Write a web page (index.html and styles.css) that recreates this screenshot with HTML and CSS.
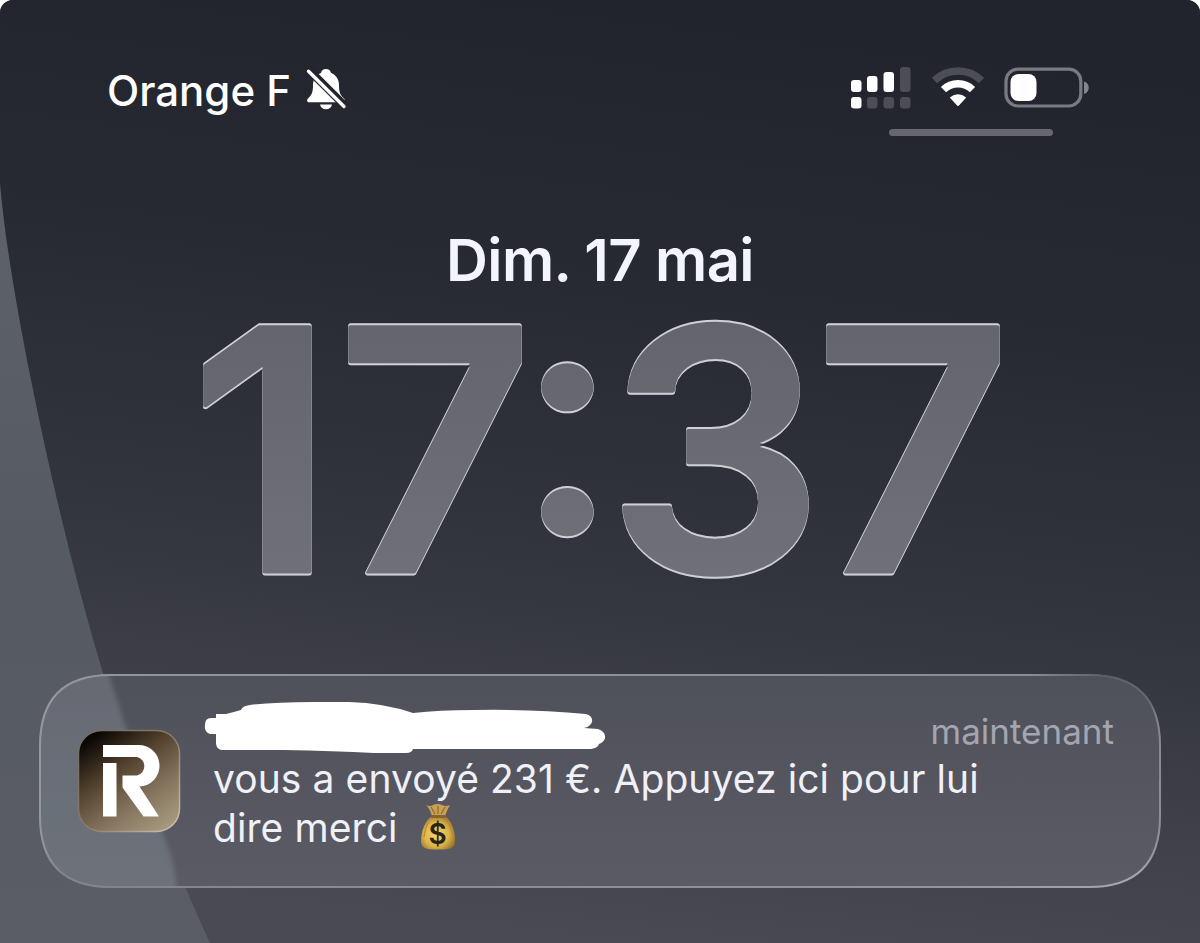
FILE: index.html
```html
<!doctype html>
<html lang="fr">
<head>
  <meta charset="utf-8">
  <title>Écran verrouillé</title>
  <link rel="stylesheet" href="styles.css">
</head>
<body>
  <div class="phone">

    <!-- wallpaper -->
    <svg class="wallpaper" viewBox="0 0 1200 943">
      <defs>
        <linearGradient id="sky" gradientUnits="userSpaceOnUse" x1="660" y1="0" x2="540" y2="943">
          <stop offset="0" stop-color="#21232d"/>
          <stop offset="0.3" stop-color="#272933"/>
          <stop offset="0.6" stop-color="#32343e"/>
          <stop offset="0.8" stop-color="#3f404a"/>
          <stop offset="1" stop-color="#494a54"/>
        </linearGradient>
        <linearGradient id="side" x1="0" y1="0" x2="0" y2="1">
          <stop offset="0" stop-color="#5d6168"/>
          <stop offset="0.5" stop-color="#565a62"/>
          <stop offset="1" stop-color="#5a5d66"/>
        </linearGradient>
      </defs>
      <rect width="1200" height="943" fill="url(#sky)"/>
      <path d="M0 183C4 230 14 295 31 380C50 475 75 580 103 673C130 755 172 860 210 943H0Z" fill="url(#side)"/>
    </svg>

    <header class="status">
      <div class="carrier">
        <span class="carrier-name">Orange F</span>
        <svg class="bell" width="42" height="44" viewBox="0 0 42 44">
          <path d="M21 3c2.600 0 4.600 1.600 4.900 3.800C31 9 34 13.500 34 19c0 8 1.500 10 5 13.500 1.600 1.800 1 3.800-1.400 3.800H4.400C2 36.300 1.400 34.300 3 32.500 6.500 29 8 27 8 19c0-5.500 3-10 8.100-12.200C16.400 4.600 18.400 3 21 3z" fill="#fff"/>
          <path d="M15 38.500h12c-.6 3-3 4.700-6 4.700s-5.400-1.700-6-4.700z" fill="#fff"/>
          <path d="M1 1L42 42" stroke="#22242e" stroke-width="8"/>
          <path d="M3.500 5.200L39 40.500" stroke="#fff" stroke-width="3.400" stroke-linecap="round"/>
        </svg>
      </div>
      <div class="indicators">
        <svg width="62" height="44" viewBox="0 0 62 44">
          <g fill="#fff">
            <rect x="1" y="14" width="10.500" height="12" rx="3"/>
            <rect x="17" y="10" width="10.500" height="16" rx="3"/>
            <rect x="33.500" y="6" width="10.500" height="20" rx="3"/>
            <rect x="1" y="31" width="10.500" height="11.500" rx="3"/>
          </g>
          <g fill="#4c4d56">
            <rect x="50" y="1" width="10.500" height="25" rx="3"/>
            <rect x="17" y="31" width="10.500" height="11.500" rx="3"/>
            <rect x="33.500" y="31" width="10.500" height="11.500" rx="3"/>
            <rect x="50" y="31" width="10.500" height="11.500" rx="3"/>
          </g>
        </svg>
        <svg class="wifi" width="54" height="44" viewBox="0 0 54 44">
          <path d="M3.500 14.500A34 34 0 0 1 50.500 14.500" fill="none" stroke="#4c4d56" stroke-width="7.500"/>
          <path d="M12.500 23.600A21 21 0 0 1 41.500 23.600" fill="none" stroke="#fff" stroke-width="7.500"/>
          <path d="M18.800 31.500Q27 25 35.200 31.500L28.200 39.300Q27 40.500 25.800 39.300Z" fill="#fff"/>
        </svg>
        <svg class="battery" width="86" height="44" viewBox="0 0 86 44">
          <rect x="2" y="3.200" width="74.800" height="36.800" rx="12" fill="none" stroke="#797a82" stroke-width="3.200"/>
          <rect x="6.500" y="8" width="26" height="27" rx="8" fill="#fff"/>
          <path d="M80 15.500c2.800.8 4.700 3 4.700 6.300s-1.900 5.500-4.700 6.300z" fill="#85868d"/>
        </svg>
        <div class="grabber"></div>
      </div>
    </header>

    <div class="date">Dim. 17 mai</div>

    <!-- glass clock: the filter lights the top and bottom edges of the digits -->
    <svg class="clock" width="1200" height="290" viewBox="0 0 1200 290">
      <defs>
        <linearGradient id="digits" gradientUnits="userSpaceOnUse" x1="0" y1="20" x2="0" y2="278">
          <stop offset="0" stop-color="#63646c"/>
          <stop offset="1" stop-color="#6f7078"/>
        </linearGradient>
        <filter id="edges" filterUnits="userSpaceOnUse" x="0" y="0" width="1200" height="290" color-interpolation-filters="sRGB">
          <feOffset in="SourceAlpha" dx="0" dy="2" result="down"/>
          <feOffset in="SourceAlpha" dx="0" dy="-2" result="up"/>
          <feFlood flood-color="#cfcfd6"/>
          <feComposite in2="SourceAlpha" operator="in" result="light"/>
          <feComposite in="light" in2="down" operator="out" result="topEdge"/>
          <feComposite in="light" in2="up" operator="out" result="bottomEdge"/>
          <feMerge>
            <feMergeNode in="SourceGraphic"/>
            <feMergeNode in="topEdge"/>
            <feMergeNode in="bottomEdge"/>
          </feMerge>
        </filter>
      </defs>
      <g class="digits" filter="url(#edges)" fill="url(#digits)" stroke="url(#digits)">
        <text x="190" y="273">1</text>
        <text x="337" y="273">7</text>
        <text class="colon" x="514" y="235.500">:</text>
        <text x="607" y="273">3</text>
        <text x="815" y="273">7</text>
      </g>
    </svg>

    <section class="notification">
      <svg class="glass" viewBox="0 0 1122 214">
        <defs>
          <linearGradient id="pane" x1="0" y1="0" x2="0" y2="1">
            <stop offset="0" stop-color="#4e505a"/>
            <stop offset="1" stop-color="#5b5b65"/>
          </linearGradient>
          <linearGradient id="paneSide" x1="0" y1="0" x2="0" y2="1">
            <stop offset="0" stop-color="#666a72"/>
            <stop offset="1" stop-color="#6e727b"/>
          </linearGradient>
          <linearGradient id="rim" gradientUnits="userSpaceOnUse" x1="0" y1="0" x2="1122" y2="0">
            <stop offset="0" stop-color="#9698a0"/>
            <stop offset="0.1" stop-color="#92949c"/>
            <stop offset="0.88" stop-color="#8c8d96"/>
            <stop offset="0.95" stop-color="#5d5f68"/>
            <stop offset="0.99" stop-color="#666871"/>
            <stop offset="1" stop-color="#8b8c95"/>
          </linearGradient>
          <linearGradient id="rimLow" gradientUnits="userSpaceOnUse" x1="0" y1="0" x2="1122" y2="0">
            <stop offset="0" stop-color="#9698a0"/>
            <stop offset="0.020" stop-color="#80838b"/>
            <stop offset="0.1" stop-color="#84868e"/>
            <stop offset="0.8" stop-color="#93949c"/>
            <stop offset="0.98" stop-color="#a5a6ae"/>
            <stop offset="1" stop-color="#8b8c95"/>
          </linearGradient>
          <clipPath id="shape">
            <path d="M72 0H1050C1098 0 1122 24 1122 72V142C1122 190 1098 214 1050 214H72C24 214 0 190 0 142V72C0 24 24 0 72 0Z"/>
          </clipPath>
          <filter id="soft"><feGaussianBlur stdDeviation="2.500"/></filter>
        </defs>
        <g clip-path="url(#shape)">
          <rect width="1122" height="214" fill="url(#pane)"/>
          <path d="M-10 -10H66C80 30 95 80 109 120C123 160 140 190 137 224H-10Z" fill="url(#paneSide)" filter="url(#soft)"/>
        </g>
        <path d="M1 107V72C1 25 25 1 72 1H1050C1097 1 1121 25 1121 72V107" fill="none" stroke="url(#rim)" stroke-width="2"/>
        <path d="M1 107V142C1 189 25 213 72 213H1050C1097 213 1121 189 1121 142V107" fill="none" stroke="url(#rimLow)" stroke-width="2"/>
      </svg>

      <svg class="app-icon" width="104" height="104" viewBox="0 0 104 104">
        <defs>
          <linearGradient id="gold" x1="0.100" y1="0" x2="0.800" y2="1">
            <stop offset="0.060" stop-color="#090603"/>
            <stop offset="0.400" stop-color="#54432f"/>
            <stop offset="0.700" stop-color="#84735c"/>
            <stop offset="1" stop-color="#a5987f"/>
          </linearGradient>
          <linearGradient id="goldRim" x1="0" y1="0" x2="1" y2="1">
            <stop offset="0" stop-color="#6e6a65"/>
            <stop offset="0.500" stop-color="#8a7a65"/>
            <stop offset="1" stop-color="#d0c7b4"/>
          </linearGradient>
        </defs>
        <rect x="1.500" y="1.500" width="101" height="101" rx="23" fill="url(#gold)" stroke="url(#goldRim)" stroke-width="1.500"/>
        <rect x="26" y="34" width="13.500" height="53.500" fill="#fff"/>
        <path d="M26 16H61A20.500 20.500 0 0 1 62.500 57.500L82 87.500H66.500L45.500 58.500V46.500H60A9.500 9.500 0 0 0 60 28H26Z" fill="#fff"/>
      </svg>

      <div class="content">
        <div class="top-line">
          <svg class="scribble" width="402" height="52" viewBox="0 0 402 52">
            <path d="M12 12H22Q30 10 37 8Q38 4 46 3Q70 0 110 0H145Q180 1 209 11Q235 8 270 8Q330 7 382 12Q389 14 388 20Q386 25 380 26L394 27Q402 30 401 36Q400 40 395 42Q394 46 387 47H209Q208 51 202 51H170Q130 49 80 48H19Q13 48 12 42V32H6Q0 30 1 23Q1 16 7 16H12Z" fill="#fff"/>
          </svg>
          <span class="when">maintenant</span>
        </div>
        <div class="message">
          <div class="line">vous a envoyé 231 €. Appuyez ici pour lui</div>
          <div class="line last">dire merci
            <svg class="money" width="36" height="48" viewBox="0 0 36 48">
              <defs>
                <radialGradient id="bag" cx="0.450" cy="0.550" r="0.600">
                  <stop offset="0" stop-color="#f3da6c"/>
                  <stop offset="0.600" stop-color="#dcb548"/>
                  <stop offset="1" stop-color="#98702a"/>
                </radialGradient>
              </defs>
              <path d="M12 13H25C32 18 35 28 35 38C35 45 31 46.500 18 46.500S1 45 1 38C1 28 5 18 12 13Z" fill="url(#bag)"/>
              <path d="M6 2Q10 4 13 2Q18 0 22 2Q26 4 30 2Q27 7 25 13H12Q10 6 6 2Z" fill="#c9a052"/>
              <path d="M11 4L15 11M18 3V11M25 4L21 11" stroke="#8d6a35" stroke-width="1.200"/>
              <rect x="11" y="12" width="15" height="3" rx="1.500" fill="#86622c"/>
              <path d="M9 19Q5 25 4 34M28 18Q32 25 33 34" fill="none" stroke="#b68b35" stroke-width="1.200"/>
              <text class="dollar" x="17.500" y="41">$</text>
            </svg>
          </div>
        </div>
      </div>
    </section>

  </div>
</body>
</html>
```
FILE: styles.css
```css
body {
  margin: 0;
  background: #fff;
  font-family: Inter, "Liberation Sans", sans-serif;
}

.phone {
  position: relative;
  width: 1200px;
  height: 943px;
  overflow: hidden;
  border-radius: 13px 13px 0 0;
  background: #22242e;
  color: #fff;
}

/* background layer */
.wallpaper {
  position: absolute;
  top: 0;
  left: 0;
  width: 1200px;
  height: 943px;
}

/* status bar */
.status {
  position: relative;
  display: flex;
  justify-content: space-between;
  height: 160px;
  padding: 66px 110px 0 107px;
  box-sizing: border-box;
}
.carrier {
  display: flex;
  align-items: flex-start;
}
.carrier-name {
  width: 198px;
  font-size: 42px;
  line-height: 50px;
  font-weight: 500;
  white-space: nowrap;
}
.indicators {
  position: relative;
  display: flex;
  align-items: flex-start;
}
.wifi {
  margin-left: 19px;
}
.battery {
  margin-left: 19px;
}
.grabber {
  position: absolute;
  top: 63px;
  left: 39px;
  width: 164px;
  height: 7px;
  border-radius: 4px;
  background: #666770;
}

/* date and time */
.date {
  position: relative;
  height: 140px;
  padding-top: 65px;
  box-sizing: border-box;
  text-align: center;
  font-size: 58px;
  line-height: 70px;
  font-weight: 600;
  letter-spacing: -0.600px;
  color: #f3f4fe;
}
.clock {
  position: relative;
  display: block;
}
.digits {
  font-size: 340px;
  font-weight: 600;
  stroke-width: 5px;
  stroke-linejoin: round;
}
.colon {
  font-size: 335px;
  stroke: none;
}

/* notification card */
.notification {
  position: relative;
  display: flex;
  width: 1122px;
  height: 214px;
  margin: 84px 0 0 39px;
}
.glass {
  position: absolute;
  top: 0;
  left: 0;
  width: 1122px;
  height: 214px;
}
.app-icon {
  position: relative;
  margin: 55px 0 0 38px;
}
.content {
  position: relative;
  flex: 1;
  padding: 28px 47px 0 23px;
}
.top-line {
  display: flex;
  justify-content: space-between;
  height: 52px;
}
.when {
  padding-top: 7px;
  font-size: 35px;
  line-height: 44px;
  color: #a3a5b0;
}
.message {
  padding-left: 9px;
  font-size: 39px;
  line-height: 49px;
  letter-spacing: 0.080px;
  color: #f0f0f7;
  white-space: nowrap;
}
.last {
  display: flex;
  gap: 22px;
}
.dollar {
  font-size: 28px;
  font-weight: 600;
  letter-spacing: 0;
  fill: #2c2416;
  text-anchor: middle;
}
```
